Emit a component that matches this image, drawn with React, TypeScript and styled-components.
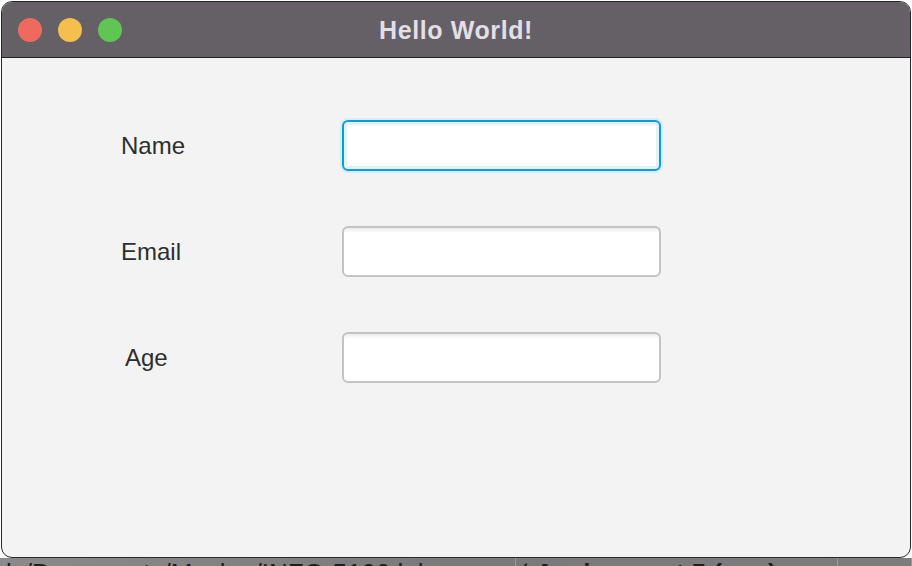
import React from "react";
import styled, { createGlobalStyle } from "styled-components";

const Global = createGlobalStyle`
  html, body { margin: 0; padding: 0; background: #ffffff; }
  body { width: 912px; height: 566px; overflow: hidden; font-family: "Liberation Sans", Arial, sans-serif; }
`;

const Page = styled.div`
  width: 912px;
  height: 566px;
  display: flex;
  flex-direction: column;
  overflow: hidden;
`;

const Window = styled.div`
  margin: 1px 1px 0 1px;
  height: 557px;
  box-sizing: border-box;
  border: 1px solid #2a2a2a;
  border-radius: 11px;
  overflow: hidden;
  display: flex;
  flex-direction: column;
  background: #f3f3f3;
`;

const TitleBar = styled.div`
  height: 56px;
  flex: none;
  box-sizing: border-box;
  background: #646066;
  border-bottom: 1px solid #1f1f1f;
  display: grid;
  grid-template-columns: 1fr auto 1fr;
  align-items: center;
`;

const Lights = styled.div`
  display: flex;
  gap: 16px;
  padding-left: 16px;
`;

const Light = styled.span<{ $color: string }>`
  width: 24px;
  height: 24px;
  border-radius: 50%;
  background: ${(p) => p.$color};
  display: block;
`;

const Title = styled.div`
  color: #e2dfe6;
  font-family: "Liberation Sans", Arial, sans-serif;
  font-weight: bold;
  font-size: 25px;
  letter-spacing: 0.6px;
  padding-top: 1px;
`;

const Content = styled.div`
  flex: 1;
  display: grid;
  grid-template-columns: 221px 319px;
  grid-auto-rows: 51px;
  row-gap: 55px;
  align-items: center;
  padding: 62px 0 0 119px;
`;

const Label = styled.label<{ $indent?: number }>`
  font-family: "Liberation Sans", Arial, sans-serif;
  font-size: 24px;
  color: #2e2e2e;
  padding-left: ${(p) => p.$indent ?? 0}px;
`;

const Input = styled.div<{ $focused?: boolean }>`
  height: 51px;
  box-sizing: border-box;
  border-radius: 6px;
  background: linear-gradient(#ececec 0px, #ffffff 5px, #ffffff 100%);
  border: ${(p) => (p.$focused ? "2px solid #0a9ed9" : "2px solid #c3c3c3")};
  box-shadow: ${(p) =>
    p.$focused ? "0 0 0 2px #d6ecf7, inset 0 0 0 3px #e3f1f8" : "none"};
`;

const Taskbar = styled.div`
  flex: 1;
  background: linear-gradient(90deg, #8a8a8a, #7a7a7a 50%, #7c7c7c);
  display: flex;
  align-items: flex-start;
  overflow: hidden;
`;

const Tab = styled.div<{ $width: number; $bold?: boolean }>`
  width: ${(p) => p.$width}px;
  flex: none;
  box-sizing: border-box;
  border-right: 1px solid #9a9a9a;
  height: 8px;
  padding-left: 6px;
  font-family: "Liberation Sans", Arial, sans-serif;
  font-size: 26px;
  font-weight: ${(p) => (p.$bold ? "bold" : "normal")};
  line-height: 26px;
  color: #1e1e1e;
  white-space: nowrap;
  overflow: visible;
  padding-top: 2px;
`;

export default function App() {
  return (
    <Page>
      <Global />
      <Window>
        <TitleBar>
          <Lights>
            <Light $color="#ee6a5f" />
            <Light $color="#f5bf4f" />
            <Light $color="#61c554" />
          </Lights>
          <Title>Hello World!</Title>
          <div />
        </TitleBar>
        <Content>
          <Label>Name</Label>
          <Input $focused />
          <Label>Email</Label>
          <Input />
          <Label $indent={4}>Age</Label>
          <Input />
        </Content>
      </Window>
      <Taskbar>
        <Tab $width={516}>ls/Documents/Maclan/INFO-5100 lab ×</Tab>
        <Tab $width={322} $bold>ʻ Assignment 5 (app) ×</Tab>
        <Tab $width={74} />
      </Taskbar>
    </Page>
  );
}
